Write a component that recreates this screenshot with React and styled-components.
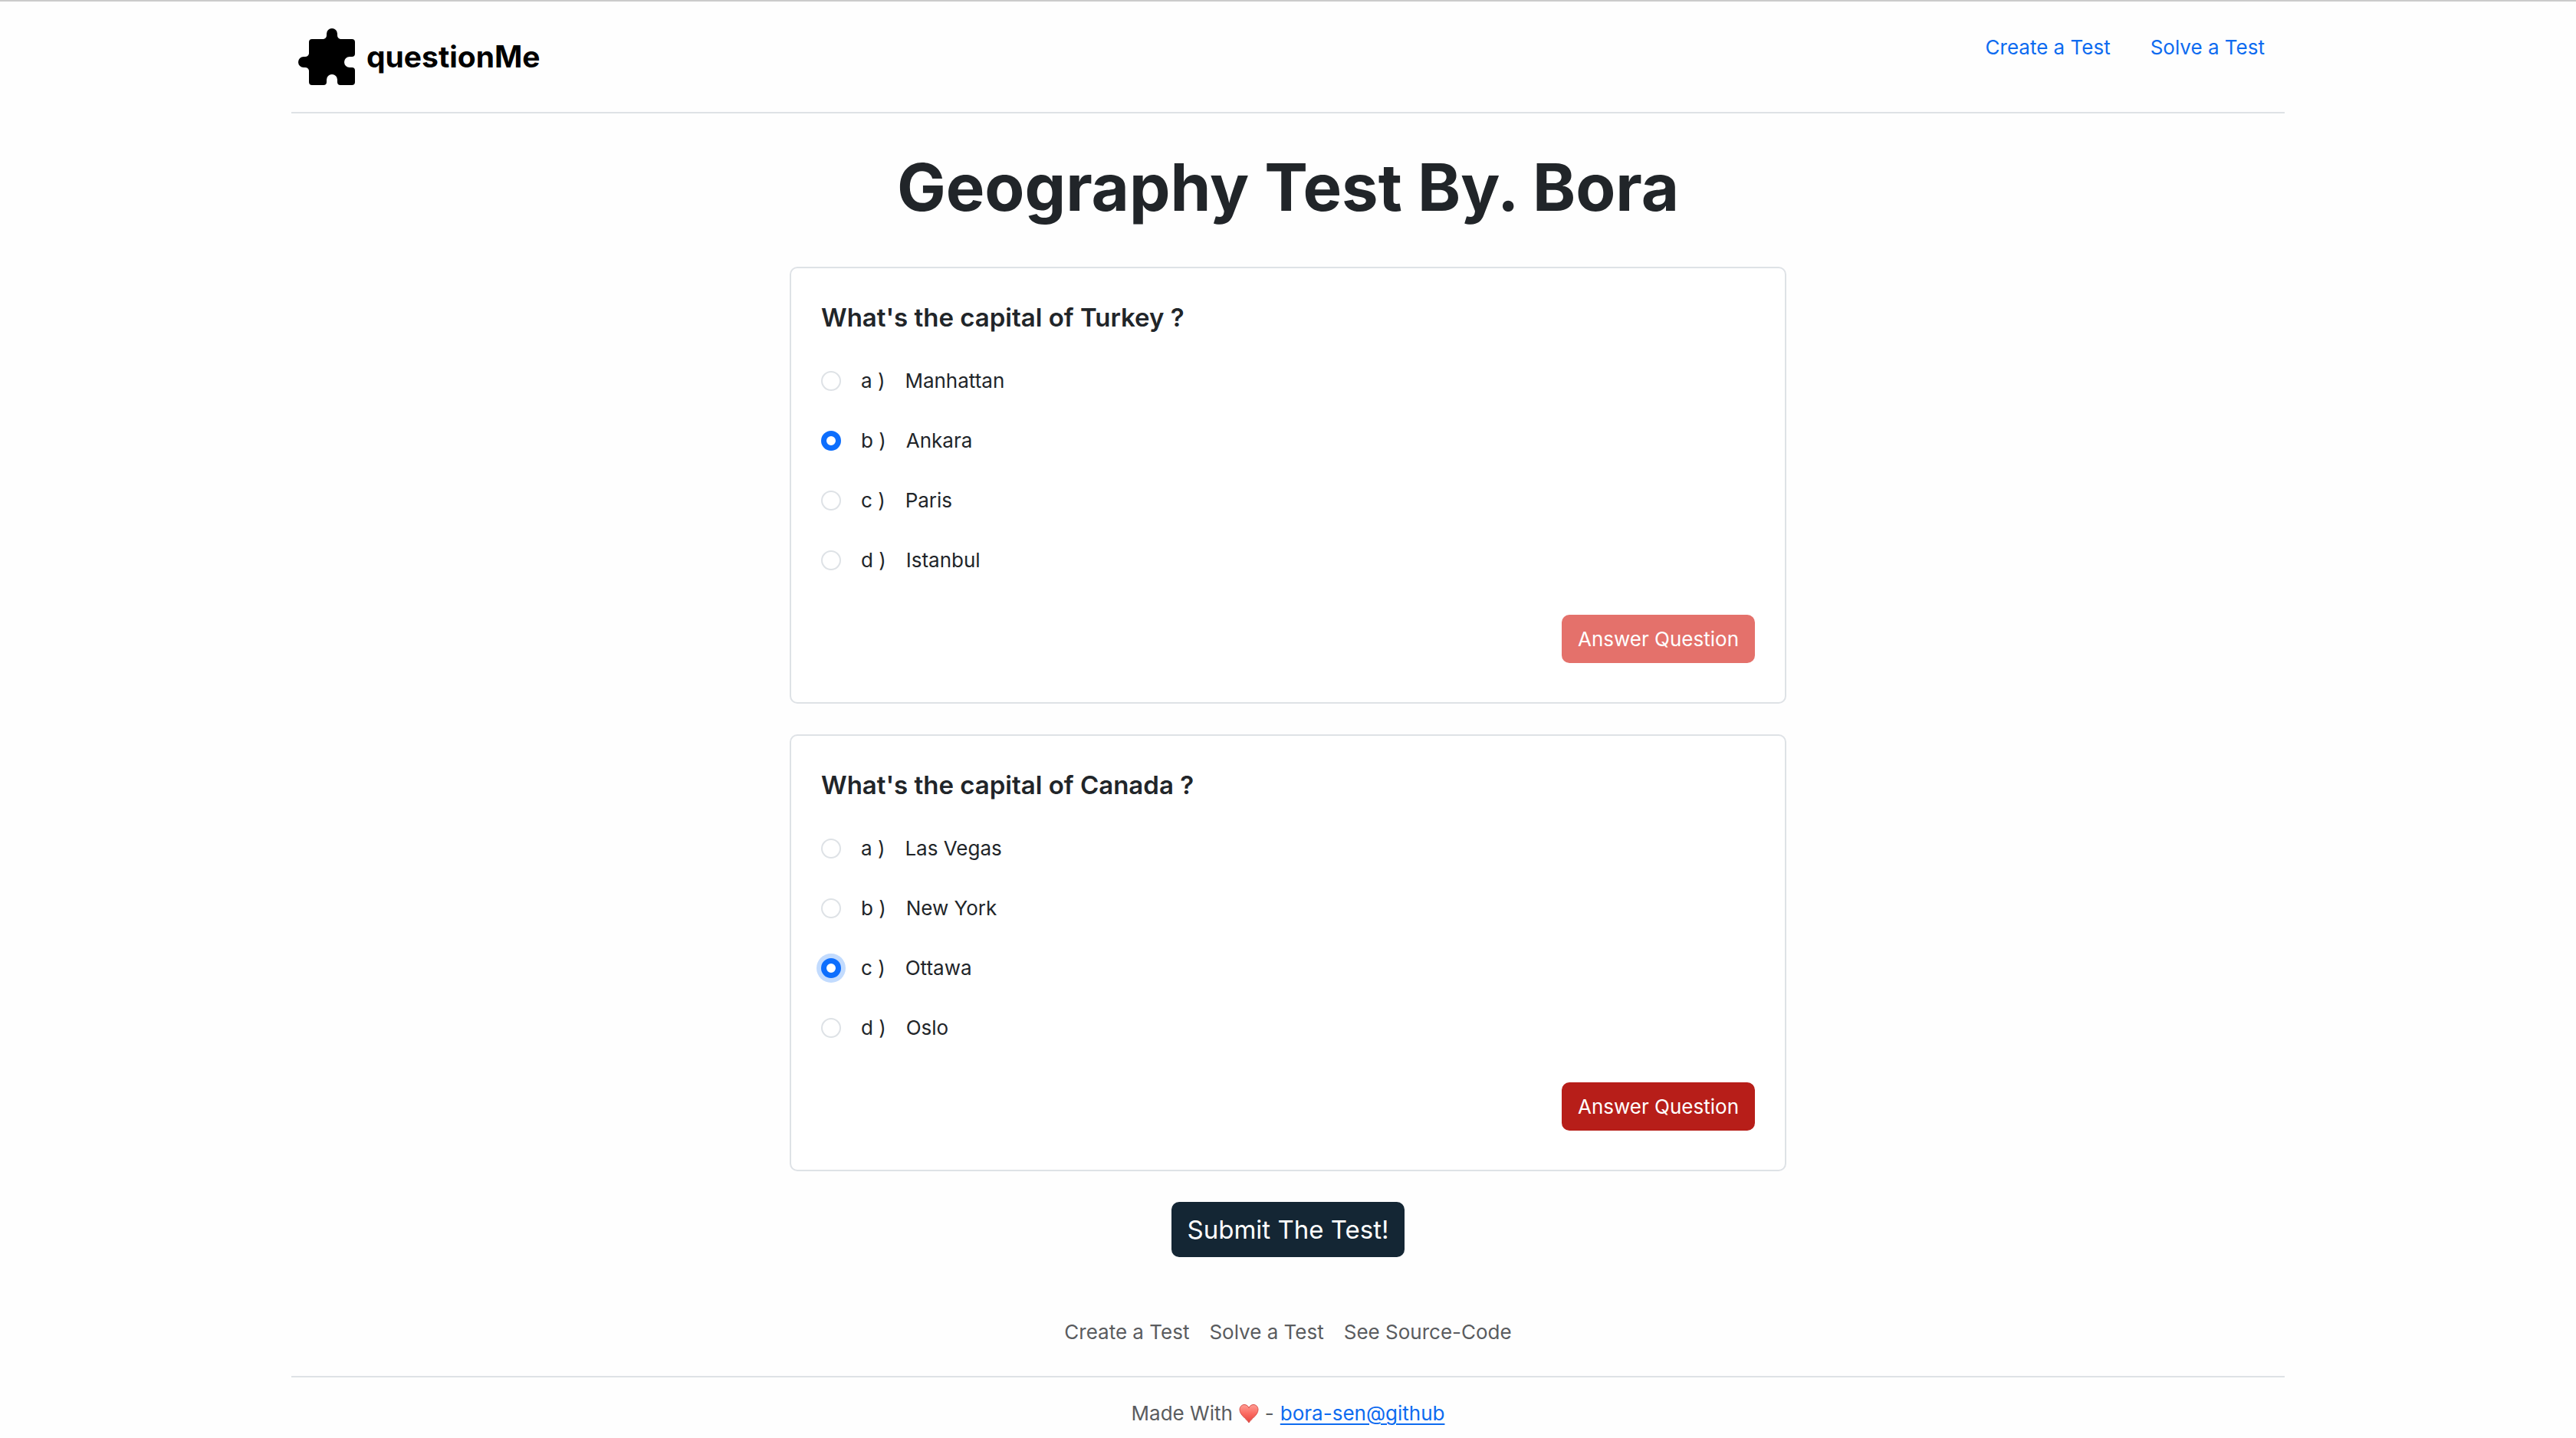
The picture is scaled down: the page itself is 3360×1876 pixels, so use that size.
import React from "react";
import styled, { createGlobalStyle } from "styled-components";

const GlobalStyle = createGlobalStyle`
  *, *::before, *::after {
    box-sizing: border-box;
  }
  body {
    margin: 0;
    background: #fefefe;
    color: #212529;
    font-family: Inter, "Liberation Sans", sans-serif;
    font-size: 26px;
    line-height: 39px;
    border-top: 2px solid #cbcbcb;
  }
`;

const Page = styled.div`
  max-width: 2600px;
  margin: 0 auto;
`;

const Header = styled.header`
  display: flex;
  justify-content: space-between;
  align-items: flex-start;
  padding: 27px 0;
  border-bottom: 2px solid #dee2e6;
`;

const Brand = styled.a`
  display: flex;
  align-items: center;
  gap: 15px;
  padding: 8px 9px;
  color: #000;
  font-size: 39px;
  font-weight: 700;
  line-height: 60px;
  text-decoration: none;
`;

const BrandMark = styled.svg`
  width: 74px;
  height: 74px;
  display: block;
`;

const Nav = styled.nav`
  display: flex;
`;

const NavLink = styled.a`
  padding: 13px 26px;
  color: #0d6bf0;
  text-decoration: none;
`;

const Main = styled.main`
  display: flex;
  flex-direction: column;
  align-items: center;
  gap: 40px;
`;

const Title = styled.h1`
  margin: 34px 0 0;
  font-size: 85px;
  font-weight: 700;
  line-height: 126px;
  text-align: center;
`;

const Card = styled.form`
  width: 50%;
  padding: 39px;
  border: 2px solid #dee2e6;
  border-radius: 10px;
  background: #fff;
`;

const Fieldset = styled.fieldset`
  margin: 0;
  padding: 0;
  border: 0;
`;

const Question = styled.legend`
  padding: 5px 0 0;
  font-size: 33px;
  font-weight: 600;
  line-height: 40px;
`;

const Options = styled.div`
  display: flex;
  flex-direction: column;
  gap: 39px;
  padding: 43px 0 52px;
`;

const Option = styled.label`
  display: flex;
  align-items: center;
  white-space: pre;
`;

const Radio = styled.input`
  appearance: none;
  width: 26px;
  height: 26px;
  margin: 0 26px 0 0;
  border: 2px solid #dee2e6;
  border-radius: 50%;
  background: #fff;

  &:checked {
    border: 7px solid #0d6efd;
  }
  &:focus {
    outline: none;
    box-shadow: 0 0 0 6px #c2dbfe;
  }
`;

const Letter = styled.span`
  margin-right: 26px;
`;

const Actions = styled.div`
  display: flex;
  justify-content: flex-end;
  padding-bottom: 12px;
`;

const Button = styled.button`
  padding: 12px 21px;
  border: 0;
  border-radius: 10px;
  background: ${(p) => (p.$large ? "#142634" : p.disabled ? "#e4716b" : "#b71e19")};
  color: #fff;
  font-family: inherit;
  font-size: ${(p) => (p.$large ? "33px" : "26px")};
  font-weight: 400;
  line-height: ${(p) => (p.$large ? "48px" : "39px")};
`;

const Footer = styled.footer`
  padding-top: 78px;
  color: #5a5c5f;
  text-align: center;
`;

const FooterNav = styled.nav`
  display: flex;
  justify-content: center;
  gap: 26px;
  padding-bottom: 38px;
  border-bottom: 2px solid #dee2e6;
`;

const FooterLink = styled.a`
  color: inherit;
  text-decoration: none;
`;

const Credit = styled.p`
  display: flex;
  justify-content: center;
  align-items: center;
  gap: 8px;
  margin: 0;
  padding-top: 27px;
`;

const Heart = styled.svg`
  width: 26px;
  height: 26px;
`;

const CreditLink = styled.a`
  color: #0d6bf0;
  text-decoration: underline;
  text-decoration-thickness: 2px;
  text-underline-offset: 4px;
`;

const PuzzleIcon = () => (
  <BrandMark viewBox="0 0 74 74" aria-hidden="true">
    <path
      fill="#000"
      d="M18 14H33Q37 13 37 9V7A7 7 0 0 1 51 7V9Q51 13 55 14H70Q74 14 74 18V33Q74 37 70 37H67A7 7 0 0 0 67 51H70Q74 51 74 55V70Q74 74 70 74H55Q51 74 51 70V67A7 7 0 0 0 37 67V70Q37 74 33 74H18Q14 74 14 70V55Q13 51 9 51H7A7 7 0 0 1 7 37H9Q13 37 14 33V18Q14 14 18 14Z"
    />
  </BrandMark>
);

const HeartIcon = () => (
  <Heart viewBox="0 0 26 26" role="img" aria-label="love">
    <defs>
      <linearGradient id="heart-fill" x1="0" y1="0" x2="0" y2="1">
        <stop offset="0" stopColor="#ff9d94" />
        <stop offset="0.5" stopColor="#fb6a61" />
        <stop offset="1" stopColor="#e2453f" />
      </linearGradient>
    </defs>
    <path
      fill="url(#heart-fill)"
      stroke="#d9514b"
      strokeWidth="1"
      d="M13 25C10 20 1 15 1 8C1 4 4 1.500 7 1.500C10 1.500 12.500 3.500 13 6C13.500 3.500 16 1.500 19 1.500C22 1.500 25 4 25 8C25 15 16 20 13 25Z"
    />
  </Heart>
);

const questions = [
  {
    id: "turkey",
    text: "What's the capital of Turkey ?",
    options: ["Manhattan", "Ankara", "Paris", "Istanbul"],
    selected: 1,
    answered: true,
  },
  {
    id: "canada",
    text: "What's the capital of Canada ?",
    options: ["Las Vegas", "New York", "Ottawa", "Oslo"],
    selected: 2,
    answered: false,
  },
];

const QuestionCard = ({ id, text, options, selected, answered }) => (
  <Card onSubmit={(e) => e.preventDefault()}>
    <Fieldset>
      <Question>{text}</Question>
      <Options>
        {options.map((option, i) => (
          <Option key={option} htmlFor={`${id}-${i}`}>
            <Radio
              type="radio"
              id={`${id}-${i}`}
              name={id}
              defaultChecked={i === selected}
              autoFocus={!answered && i === selected}
            />
            <Letter>{"abcd"[i]} )</Letter>
            <span>{option}</span>
          </Option>
        ))}
      </Options>
    </Fieldset>
    <Actions>
      <Button type="submit" disabled={answered}>
        Answer Question
      </Button>
    </Actions>
  </Card>
);

export default function App() {
  return (
    <>
      <GlobalStyle />
      <Page>
        <Header>
          <Brand href="#home">
            <PuzzleIcon />
            questionMe
          </Brand>
          <Nav>
            <NavLink href="#create">Create a Test</NavLink>
            <NavLink href="#solve">Solve a Test</NavLink>
          </Nav>
        </Header>
        <Main>
          <Title>Geography Test By. Bora</Title>
          {questions.map((q) => (
            <QuestionCard key={q.id} {...q} />
          ))}
          <Button type="button" $large>
            Submit The Test!
          </Button>
        </Main>
        <Footer>
          <FooterNav>
            <FooterLink href="#create">Create a Test</FooterLink>
            <FooterLink href="#solve">Solve a Test</FooterLink>
            <FooterLink href="#source">See Source-Code</FooterLink>
          </FooterNav>
          <Credit>
            <span>Made With</span>
            <HeartIcon />
            <span>-</span>
            <CreditLink href="#github">bora-sen@github</CreditLink>
          </Credit>
        </Footer>
      </Page>
    </>
  );
}
